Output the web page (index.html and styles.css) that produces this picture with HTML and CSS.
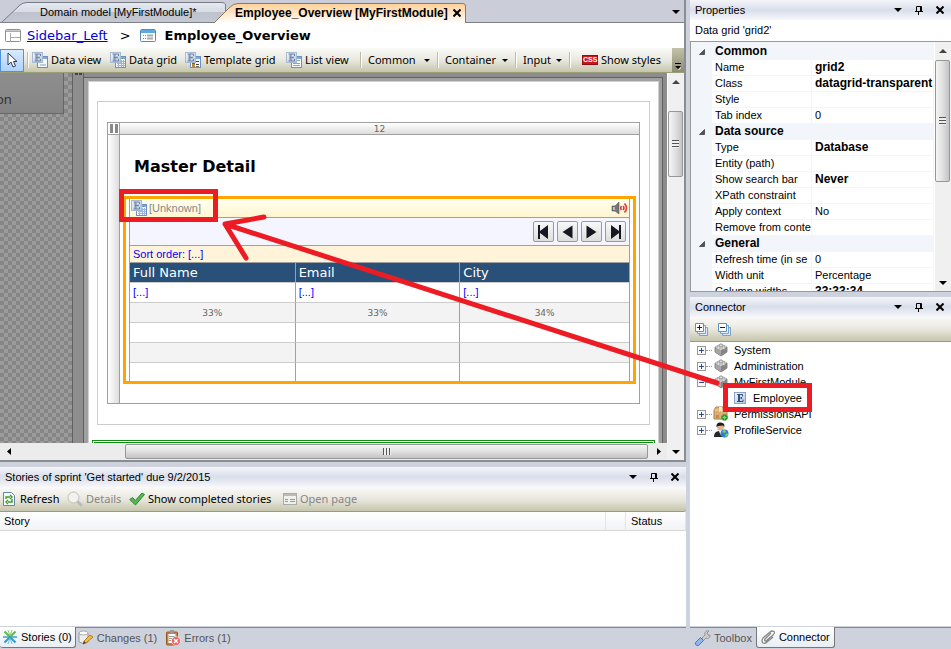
FILE: index.html
```html
<!DOCTYPE html>
<html lang="en">
<head>
<meta charset="utf-8">
<title>Employee_Overview [MyFirstModule]</title>
<link rel="stylesheet" href="styles.css">
</head>
<body>
<svg class="defs" aria-hidden="true">
  <defs>
    <linearGradient id="g-tab" x1="0" y1="0" x2="0" y2="1"><stop offset="0" stop-color="#e6eaf1"/><stop offset=".48" stop-color="#d6dbe4"/><stop offset=".5" stop-color="#bdc2cd"/><stop offset="1" stop-color="#c3c8d2"/></linearGradient>
    <linearGradient id="g-active" x1="0" y1="0" x2="0" y2="1"><stop offset="0" stop-color="#ffcf95"/><stop offset="1" stop-color="#fff"/></linearGradient>
    <linearGradient id="g-blue" x1="0" y1="0" x2="1" y2="1"><stop offset="0" stop-color="#f4f8fc"/><stop offset="1" stop-color="#adc5e3"/></linearGradient>
    <symbol id="entity" viewBox="0 0 16 16">
      <rect x="5.500" y="4.500" width="10" height="11" fill="#f3f8fd" stroke="#6a90c8"/>
      <path d="M6 5h9v2H6z" fill="#86a9da"/>
      <rect x=".5" y=".5" width="10" height="10" fill="url(#g-blue)" stroke="#a9b9cf"/>
      <path d="M2.500 2h6v2M2.500 9h6V7M4 2v7M5 2v7M4 5.500h3.500M7 4.500v2" fill="none" stroke="#6f83a5"/>
    </symbol>
    <symbol id="i-view" viewBox="0 0 16 16"><use href="#entity"/><path d="M8 12h6v2H8z" fill="#b8cce6"/></symbol>
    <symbol id="i-grid" viewBox="0 0 16 16"><use href="#entity"/><path d="M11 9.500h4M7 11.500h8M7 13.500h8M8.500 11v4M11.500 8v7M13.500 8v7" stroke="#9ab6dc" fill="none"/><path d="M12 6h1v1h-1z" fill="#43a047"/></symbol>
    <symbol id="i-template" viewBox="0 0 16 16"><use href="#entity"/><path d="M11 9.500h3M11 12.500h3" stroke="#444" fill="none"/><path d="M7 12h3v3H7z" fill="#b58a3a"/><path d="M7 11h3v1H7zM11 14h3v1h-3z" fill="#666"/></symbol>
    <symbol id="i-list" viewBox="0 0 16 16"><use href="#entity"/><path d="M11 8.500h3M7 11.500h7M7 13.500h7" stroke="#86b18f" fill="none"/></symbol>
    <symbol id="i-e" viewBox="0 0 12 12"><rect x=".5" y=".5" width="11" height="11" fill="url(#g-blue)" stroke="#8ba3c4"/><path d="M3 2.500h5.500v2M3 9.500h6v-2M4.500 2.500v7M5.500 2.500v7M5 6h2.500M7.500 5v2" fill="none" stroke="#35507c"/></symbol>
    <symbol id="i-cube" viewBox="0 0 14 14"><path d="M7 1l6 3v5l-6 4-6-4V4z" fill="#a6a6a6" stroke="#777" stroke-width=".8"/><path d="M7 1l6 3-6 3-6-3z" fill="#e3e3e3"/><path d="M7 7v6l6-4V4z" fill="#858585"/><path d="M3 4a1.500 1 0 0 1 3 0v1.500a1.500 1 0 0 1-3 0zM8 4a1.500 1 0 0 1 3 0v1.500a1.500 1 0 0 1-3 0zM5.500 2a1.500 1 0 0 1 3 0v1a1.500 1 0 0 1-3 0z" fill="#ddd" stroke="#888" stroke-width=".6"/></symbol>
    <symbol id="i-box" viewBox="0 0 16 16"><path d="M1 4l2-3h9l2 3v9H1z" fill="#dcae75" stroke="#b17e45"/><path d="M1.500 4h12" stroke="#f1d3a5"/><path d="M6 1h3v5l-1.500-1L6 6z" fill="#f7e7c9"/><path d="M3 9h3v3H3z" fill="#c38b52"/><path d="M11.500 8.500v6M8.500 11.500h6" stroke="#18851e" stroke-width="3.500"/><path d="M11.500 9.500v4M9.500 11.500h4" stroke="#72df65" stroke-width="1.500"/></symbol>
    <symbol id="i-user" viewBox="0 0 16 16"><path d="M1 15c0-4 2-6 6-6s6 2 6 6z" fill="#26282b"/><path d="M6 9l1.500 4L9 9z" fill="#fff"/><circle cx="7.500" cy="5" r="3.500" fill="#e4b58d"/><path d="M3.500 5C3 1 6 0 8 .5s4 1 3.300 4.500L10 3.500 5 4z" fill="#231e1a"/><circle cx="11.500" cy="11.500" r="4" fill="#2d82cf"/><path d="M9 10l2-2 2 1-1 2zM12 13l2-2 1 2-2 2z" fill="#8ccf68"/></symbol>
    <symbol id="i-plus" viewBox="0 0 9 9"><rect x=".5" y=".5" width="8" height="8" fill="#f8f8f8" stroke="#979797"/><path d="M2 4.500h5M4.500 2v5" stroke="#28489a"/></symbol>
    <symbol id="i-minus" viewBox="0 0 9 9"><rect x=".5" y=".5" width="8" height="8" fill="#f8f8f8" stroke="#979797"/><path d="M2 4.500h5" stroke="#28489a"/></symbol>
    <symbol id="i-down" viewBox="0 0 8 4"><path d="M0 0h8L4 4z"/></symbol>
    <symbol id="i-pin" viewBox="0 0 8 9"><path d="M1.500 5V.5h5V5M5.500 1v4M0 5.500h8M3.500 6v3" fill="none" stroke="#000"/></symbol>
    <symbol id="i-x" viewBox="0 0 8 8"><path d="M.5 .5l7 7M7.500 .5l-7 7" stroke="#000" stroke-width="2" fill="none"/></symbol>
    <symbol id="i-form" viewBox="0 0 16 14"><rect x=".5" y=".5" width="15" height="12" rx="1" fill="#fff" stroke="#5688b8"/><path d="M1 1h14v3H1z" fill="#58aae8"/><path d="M3 6.500h3M3 9.500h3" stroke="#888" stroke-dasharray="1 1"/><path d="M7 6.500h6M7 9.500h6" stroke="#aaa" stroke-width="2"/></symbol>
    <symbol id="i-formgray" viewBox="0 0 14 12"><rect x=".5" y=".5" width="13" height="11" fill="#f0f0ec" stroke="#aaa"/><path d="M1 1h12v2H1z" fill="#bbb"/><path d="M2 6.500h3M2 8.500h3M7 6.500h5M7 8.500h5" stroke="#999"/></symbol>
    <symbol id="i-layout" viewBox="0 0 16 14"><rect x=".5" y=".5" width="15" height="12" rx="1" fill="#fff" stroke="#8e8e8e"/><path d="M1 2.500h14M5.500 4v9M6 8.500h9" stroke="#aaa" fill="none"/><path d="M1 1h14v1H1z" fill="#ccc"/></symbol>
    <symbol id="i-tri" viewBox="0 0 6 6"><path d="M5.500 .5v5h-5z" fill="#555" stroke="#222" stroke-width=".6"/></symbol>
  </defs>
</svg>

<div class="app">
  <main class="left">
    <section class="editor">
      <div class="doctabs" role="tablist">
        <button class="doctab" role="tab"><svg class="tabshape" viewBox="0 0 226 20" preserveAspectRatio="none"><path d="M2 20L20 3Q23 .5 27 .5H221Q225.500 .5 225.500 3V20" fill="url(#g-tab)" stroke="#777b84"/></svg><span>Domain model [MyFirstModule]*</span></button>
        <button class="doctab active" role="tab" aria-selected="true"><svg class="tabshape" viewBox="0 0 252 20" preserveAspectRatio="none"><path d="M0 20L15 5Q19 .5 24 .5H249Q251.500 .5 251.500 3V20" fill="url(#g-active)" stroke="#8f7a5c"/></svg><span>Employee_Overview [MyFirstModule]</span><svg class="ic8"><use href="#i-x"/></svg></button>
        <button class="doclist" aria-label="Open documents"><svg class="caret"><use href="#i-down"/></svg></button>
      </div>
      <nav class="crumbs">
        <svg class="ic-form"><use href="#i-layout"/></svg><a href="#layout">Sidebar_Left</a><span class="gt">&gt;</span><svg class="ic-form"><use href="#i-form"/></svg><b>Employee_Overview</b>
      </nav>
      <div class="toolbar main-tools">
        <button class="pointer" aria-label="Select"><svg width="12" height="17" viewBox="0 0 12 17"><path d="M2 1v12l3-3 2 5 2.500-1-2-4.500H11z" fill="#fff" stroke="#2f3c50"/></svg></button>
        <i class="sep"></i>
        <button class="w-view"><svg class="ic16"><use href="#i-view"/></svg>Data view</button>
        <button class="w-grid"><svg class="ic16"><use href="#i-grid"/></svg>Data grid</button>
        <button class="w-tpl"><svg class="ic16"><use href="#i-template"/></svg>Template grid</button>
        <button class="w-list"><svg class="ic16"><use href="#i-list"/></svg>List view</button>
        <i class="sep"></i>
        <button class="drop w-common">Common<svg class="drop-caret"><use href="#i-down"/></svg></button>
        <i class="sep"></i>
        <button class="drop w-cont">Container<svg class="drop-caret"><use href="#i-down"/></svg></button>
        <i class="sep"></i>
        <button class="drop w-input">Input<svg class="drop-caret"><use href="#i-down"/></svg></button>
        <i class="sep"></i>
        <button class="css-btn"><span class="css-badge">CSS</span>Show styles</button>
        <button class="overflow" aria-label="More tools"><svg width="6" height="7" viewBox="0 0 6 7"><path d="M0 0h6v1H0zM0 3h6L3 6z"/><path d="M3 7l3-3v1L4 7z" fill="#fff"/></svg></button>
      </div>
      <div class="workspace">
        <div class="canvas">
          <div class="sidebar"><div class="sideitem">on</div></div>
          <div class="gutter"><i></i><i></i></div>
          <div class="stage">
            <div class="page">
              <div class="container">
                <div class="layoutgrid">
                  <div class="handle"><i></i><i></i></div>
                  <div class="colhead">12</div>
                  <div class="rowhead"></div>
                  <div class="cell">
                    <h1>Master Detail</h1>
                    <div class="selected">
                      <div class="datagrid">
                        <div class="entitybar"><svg class="ic16"><use href="#i-grid"/></svg><span>[Unknown]</span>
                          <svg class="speaker" width="17" height="12" viewBox="0 0 17 12"><path d="M1 4h3l4-4v12L4 9H1z" fill="#777" stroke="#555" stroke-width=".6"/><path d="M2 5h2v3H2z" fill="#bbb"/><path d="M10.500 4q-1.500 2 0 4M12 4q2 2 0 4M13.500 1.500q4 4.500 0 9" fill="none" stroke="#e2393b" stroke-width="1.600"/></svg></div>
                        <div class="pager">
                          <button aria-label="First"><svg width="11" height="14" viewBox="0 0 11 14"><path d="M0 0h2v6l8-6v14L2 8v6H0z" fill="#151820"/></svg></button>
                          <button aria-label="Previous"><svg width="11" height="14" viewBox="0 0 11 14"><path d="M10.500 .5v13L.5 7z" fill="#151820"/></svg></button>
                          <button aria-label="Next"><svg width="11" height="14" viewBox="0 0 11 14"><path d="M.5 .5v13l10-6.500z" fill="#151820"/></svg></button>
                          <button aria-label="Last"><svg width="11" height="14" viewBox="0 0 11 14"><path d="M11 0H9v6L1 0v14l8-6v6h2z" fill="#151820"/></svg></button>
                        </div>
                        <div class="sort">Sort order: [...]</div>
                        <table class="cols">
                          <colgroup><col class="third"><col class="third"><col></colgroup>
                          <thead><tr><th>Full Name</th><th>Email</th><th>City</th></tr></thead>
                          <tbody>
                            <tr class="attr"><td>[...]</td><td>[...]</td><td>[...]</td></tr>
                            <tr class="pct"><td>33%</td><td>33%</td><td>34%</td></tr>
                            <tr><td></td><td></td><td></td></tr>
                            <tr class="alt"><td></td><td></td><td></td></tr>
                            <tr class="end"><td></td><td></td><td></td></tr>
                          </tbody>
                        </table>
                      </div>
                    </div>
                  </div>
                </div>
              </div>
              <div class="dropzone"></div>
            </div>
          </div>
        </div>
        <div class="vscroll"><svg width="8" height="4" viewBox="0 0 8 4"><path d="M4 0l4 4H0z" fill="#444"/></svg><div class="thumb"><i></i></div><svg class="end" width="8" height="4"><use href="#i-down"/></svg></div>
        <div class="hscroll"><svg width="4" height="7" viewBox="0 0 4 7"><path d="M4 0v7L0 3.500z"/></svg><div class="thumb"><i></i></div><svg width="4" height="7" viewBox="0 0 4 7"><path d="M0 0v7l4-3.500z"/></svg></div>
        <div class="corner"><svg width="8" height="4"><use href="#i-down"/></svg></div>
      </div>
    </section>

    <section class="stories">
      <header class="title"><span>Stories of sprint 'Get started' due 9/2/2015</span><button aria-label="Menu"><svg class="caret"><use href="#i-down"/></svg></button><button aria-label="Pin"><svg class="pin"><use href="#i-pin"/></svg></button><button aria-label="Close"><svg class="ic8"><use href="#i-x"/></svg></button></header>
      <div class="toolbar story-tools">
        <button class="w-refresh"><svg width="12" height="14" viewBox="0 0 12 14"><path d="M.5 .5h8l3 3v10H.5z" fill="#f5faff" stroke="#6484a8"/><path d="M3 7V5h4M7 3l2 2-2 2M9 7v3H5M5 8l-2 2 2 2" fill="none" stroke="#3f9b22" stroke-width="1.400"/></svg>Refresh</button>
        <button class="w-details" disabled><svg width="16" height="16" viewBox="0 0 16 16"><path d="M10 10l4 4" stroke="#bbb" stroke-width="3" stroke-linecap="round"/><circle cx="6.500" cy="6.500" r="5.500" fill="#f2f2ef" stroke="#c0c0bc"/></svg>Details</button>
        <button class="w-show"><svg width="16" height="14" viewBox="0 0 16 14"><path d="M.7 7.500l3-2 2.600 3L13 1l2.500 1.500-9 10.500z" fill="#58b457" stroke="#2f8a38"/></svg>Show completed stories</button>
        <button disabled><svg width="14" height="12"><use href="#i-formgray"/></svg>Open page</button>
      </div>
      <table class="storylist"><thead><tr><th>Story</th><th class="gapcol"></th><th class="status">Status</th></tr></thead></table>
      <div class="blank"></div>
    </section>
    <div class="bottomtabs" role="tablist">
      <button class="on" role="tab"><svg width="16" height="16" viewBox="0 0 16 16"><path d="M1 8h14" stroke="#36a4d8" stroke-width="1.500"/><path d="M2.500 2.500L8 8M8 8l5.500-5.500" stroke="#5fba46" stroke-width="2"/><path d="M6 1l2 6 2-6" fill="none" stroke="#86cb72"/><path d="M8 8l-5.500 5.500M8 8l5.500 5.500" stroke="#2b9cd5" stroke-width="2"/><path d="M6 15l2-6 2 6" fill="none" stroke="#6fbde3"/></svg>Stories (0)</button>
      <button role="tab"><svg width="16" height="16" viewBox="0 0 16 16"><path d="M1 3v9q4 3 9 0V3" fill="#eee" stroke="#999"/><ellipse cx="5.500" cy="3" rx="4.500" ry="2" fill="#fff" stroke="#aaa"/><path d="M5 14l1-3 6-6 3 2-7 6z" fill="#f3bd45" stroke="#b17e27"/><path d="M5 14l1-3 2 2z" fill="#633"/></svg>Changes (1)</button>
      <button role="tab"><svg width="16" height="16" viewBox="0 0 16 16"><rect x="1.500" y="2" width="11" height="13" rx="1" fill="#c88342" stroke="#8e5925"/><path d="M3.500 4h7v9h-7z" fill="#fff"/><path d="M5 0h4v3H5z" fill="#999"/><path d="M4 6.500h6M4 8.500h5M4 10.500h4" stroke="#999"/><circle cx="11" cy="11" r="4.500" fill="#ef6060" stroke="#fff" stroke-width=".6"/><path d="M9 9l4 4M13 9l-4 4" stroke="#fff" stroke-width="1.500"/></svg>Errors (1)</button>
    </div>
  </main>

  <aside class="right">
    <section class="props">
      <header class="title"><span>Properties</span><button aria-label="Menu"><svg class="caret"><use href="#i-down"/></svg></button><button aria-label="Pin"><svg class="pin"><use href="#i-pin"/></svg></button><button aria-label="Close"><svg class="ic8"><use href="#i-x"/></svg></button></header>
      <p class="subject">Data grid 'grid2'</p>
      <div class="propgrid">
        <div class="proprows">
        <table>
          <colgroup><col class="c-toggle"><col class="c-name"><col></colgroup>
          <tbody>
            <tr class="group"><td><svg class="tri"><use href="#i-tri"/></svg></td><th colspan="2">Common</th></tr>
            <tr><td></td><th>Name</th><td><b>grid2</b></td></tr>
            <tr><td></td><th>Class</th><td><b>datagrid-transparent d</b></td></tr>
            <tr><td></td><th>Style</th><td></td></tr>
            <tr><td></td><th>Tab index</th><td>0</td></tr>
            <tr class="group"><td><svg class="tri"><use href="#i-tri"/></svg></td><th colspan="2">Data source</th></tr>
            <tr><td></td><th>Type</th><td><b>Database</b></td></tr>
            <tr><td></td><th>Entity (path)</th><td></td></tr>
            <tr><td></td><th>Show search bar</th><td><b>Never</b></td></tr>
            <tr><td></td><th>XPath constraint</th><td></td></tr>
            <tr><td></td><th>Apply context</th><td>No</td></tr>
            <tr><td></td><th>Remove from conte</th><td></td></tr>
            <tr class="group"><td><svg class="tri"><use href="#i-tri"/></svg></td><th colspan="2">General</th></tr>
            <tr><td></td><th>Refresh time (in se</th><td>0</td></tr>
            <tr><td></td><th>Width unit</th><td>Percentage</td></tr>
            <tr><td></td><th>Column widths</th><td><b>33;33;34</b></td></tr>
          </tbody>
        </table>
        </div>
        <div class="vscroll"><svg width="8" height="4" viewBox="0 0 8 4"><path d="M4 0l4 4H0z" fill="#444"/></svg><div class="thumb"><i></i></div><svg class="end" width="8" height="4"><use href="#i-down"/></svg></div>
      </div>
    </section>
    <section class="connector">
      <header class="title"><span>Connector</span><button aria-label="Menu"><svg class="caret"><use href="#i-down"/></svg></button><button aria-label="Pin"><svg class="pin"><use href="#i-pin"/></svg></button><button aria-label="Close"><svg class="ic8"><use href="#i-x"/></svg></button></header>
      <div class="toolbar tree-tools">
        <button aria-label="Expand all"><svg width="13" height="13" viewBox="0 0 13 13"><path d="M4.500 4.500h8v8h-8z" fill="#dceaf7" stroke="#7ba2c8"/><path d="M2.500 2.500h8v8h-8z" fill="#e6f1fb" stroke="#7ba2c8"/><path d="M.5 .5h8v8h-8z" fill="#fff" stroke="#5d8fc0"/><path d="M2 4.500h5M4.500 2v5" stroke="#222"/></svg></button>
        <button aria-label="Collapse all"><svg width="13" height="13" viewBox="0 0 13 13"><path d="M4.500 4.500h8v8h-8z" fill="#dceaf7" stroke="#7ba2c8"/><path d="M2.500 2.500h8v8h-8z" fill="#e6f1fb" stroke="#7ba2c8"/><path d="M.5 .5h8v8h-8z" fill="#fff" stroke="#5d8fc0"/><path d="M2 4.500h5" stroke="#222"/></svg></button>
      </div>
      <ul class="tree">
        <li><svg class="tog"><use href="#i-plus"/></svg><i></i><svg class="cube"><use href="#i-cube"/></svg>System</li>
        <li><svg class="tog"><use href="#i-plus"/></svg><i></i><svg class="cube"><use href="#i-cube"/></svg>Administration</li>
        <li><svg class="tog"><use href="#i-minus"/></svg><i></i><svg class="cube"><use href="#i-cube"/></svg>MyFirstModule</li>
        <li class="child"><svg class="ent"><use href="#i-e"/></svg>Employee</li>
        <li><svg class="tog"><use href="#i-plus"/></svg><i></i><svg class="cube tall"><use href="#i-box"/></svg>PermissionsAPI</li>
        <li><svg class="tog"><use href="#i-plus"/></svg><i></i><svg class="cube tall"><use href="#i-user"/></svg>ProfileService</li>
      </ul>
    </section>
    <div class="bottomtabs" role="tablist">
      <button role="tab"><svg width="17" height="16" viewBox="0 0 17 16"><path d="M8 8l3-3c-1-3 2-5 4-4l-2 2 1 2h2c0 3-2 4-4 3l-3 3z" fill="#ccc" stroke="#888" stroke-width=".8"/><path d="M1.500 12.500l5-5 3 3-5 5q-4 0-3-3z" fill="#8fb4ee" stroke="#4f79c1"/></svg>Toolbox</button>
      <button class="on" role="tab"><svg width="15" height="14" viewBox="0 0 15 14"><path d="M10 3L4 9q-1 2 1 2l7-6q3-3 0-4-2 0-3 1L2 8q-2 3 0 5 2 1 4-1l6-5" fill="none" stroke="#888" stroke-width="1.300"/></svg>Connector</button>
    </div>
  </aside>
</div>

<svg class="annotations" width="951" height="649" viewBox="0 0 951 649" aria-hidden="true">
  <g fill="none" stroke="#ed1c24">
    <rect x="121.500" y="191.500" width="94" height="28" stroke-width="5"/>
    <rect x="725.500" y="385.500" width="84" height="24" stroke-width="5"/>
    <path d="M717 383L225 224M264 217l-39 7 21 34" stroke-width="5" stroke-linecap="round" stroke-linejoin="round"/>
  </g>
</svg>
</body>
</html>
```
FILE: styles.css
```css
* { box-sizing: border-box; }
body {
  margin: 0;
  background: #ced2dd;
  color: #000;
  font: 11px/16px "Liberation Sans", sans-serif;
  overflow: hidden;
}
button { border: 0; padding: 0; margin: 0; background: none; color: inherit; font: inherit; display: flex; align-items: center; white-space: nowrap; }
svg { display: block; flex: none; }
table { border-collapse: separate; border-spacing: 0; width: 100%; table-layout: fixed; }
.defs { position: absolute; width: 0; height: 0; }
.annotations { position: absolute; left: 0; top: 0; pointer-events: none; }
.ic8 { width: 8px; height: 8px; }
.ic16 { width: 16px; height: 16px; }
.caret { width: 8px; height: 4px; }
.pin { width: 8px; height: 9px; }

.app { display: grid; grid-template-columns: minmax(0, 1fr) 261px; column-gap: 4px; height: 100vh; min-height: 649px; }
.left, .right { display: flex; flex-direction: column; min-height: 0; min-width: 0; }

/* document editor */
.editor { flex: 1; display: flex; flex-direction: column; min-height: 0; border-right: 2px solid #8a8d92; border-bottom: 2px solid #8a8d92; background: #fff; }
.doctabs { display: flex; height: 23px; background: #cbced9; border-bottom: 1px solid #7c8088; align-items: flex-end; }
.doctab { position: relative; height: 20px; width: 226px; padding-left: 40px; }
.doctab span { position: relative; }
.doctab.active { width: 252px; margin-left: -12px; margin-bottom: -1px; padding-left: 21px; font-weight: bold; font-size: 12px; gap: 5px; }
.doctab.active .ic8 { position: relative; }
.tabshape { position: absolute; left: 0; top: 0; width: 100%; height: 100%; }
.doclist { margin-left: auto; height: 20px; padding-right: 4px; }

.crumbs { display: flex; align-items: center; height: 25px; padding-left: 5px; font-family: "DejaVu Sans", sans-serif; font-size: 13px; }
.crumbs a { color: #0000e0; margin-left: 6px; }
.crumbs .gt { margin: 0 9px 0 12px; }
.crumbs b { margin-left: 9px; }
.ic-form { width: 16px; height: 14px; }

.toolbar { display: flex; align-items: center; font-family: "Noto Sans", sans-serif; background: linear-gradient(#fafaf7, #e9e8df 50%, #c6c5ac); border-bottom: 1px solid #9c9c78; }
.main-tools { height: 25px; }
.toolbar button { gap: 3px; }
.pointer { width: 24px; height: 23px; justify-content: center; background: linear-gradient(#d8eaff, #aed2ff); border: 1px solid #4f93de; }
.sep { width: 2px; height: 16px; border-left: 1px solid #bdbba0; border-right: 1px solid #fff; flex: none; }
.pointer + .sep { margin: 0 3px 0 3px; }
.w-view { width: 78px; }
.w-grid { width: 75px; }
.w-tpl { width: 101px; }
.w-list { width: 74px; }
.drop { justify-content: space-between; padding: 0 7px 0 6px; }
.w-common { width: 75px; }
.w-cont { width: 76px; }
.w-input { width: 52px; }
.drop-caret { width: 6px; height: 3px; }
.css-btn { margin-left: 11px; }
.css-badge { width: 16px; height: 10px; background: #c8171e; border: 1px solid #8e1015; color: #fff; font: bold 7px/8px "Liberation Sans", sans-serif; text-align: center; }
.toolbar .overflow { margin-left: auto; width: 12px; height: 24px; justify-content: center; align-items: flex-end; padding-bottom: 2px; background: linear-gradient(#c2c1aa, #8e8d72); }

.workspace { flex: 1; min-height: 0; display: grid; grid-template: minmax(0, 1fr) 17px / minmax(0, 1fr) 17px; }
.canvas { display: flex; background: #a0a0a0; overflow: hidden; min-width: 0; }
.sidebar { width: 72px; flex: none; background: repeating-conic-gradient(#868686 0 25%, #9c9c9c 0 50%) 0 0 / 8px 8px; }
.sideitem { width: 64px; height: 41px; padding: 16px 0 0; background: linear-gradient(#8e8e8e, #848484); border-right: 1px solid #666; border-bottom: 1px solid #666; color: #333; font: 13px/20px "Noto Sans", sans-serif; text-indent: -4px; overflow: hidden; }
.gutter { width: 12px; flex: none; background: #8e8e8e; border: solid #606060; border-width: 0 1px; display: flex; justify-content: center; gap: 1px; }
.gutter i { width: 3px; height: 2px; background: #444; }
.stage { flex: 1; min-width: 0; padding: 4px 4px 0 4px; border-top: 4px solid #8c8c8c; border-right: 4px solid #8c8c8c; background: #a0a0a0; box-shadow: inset 0 1px #606060, inset -1px 0 #606060; }
.page { height: 100%; background: #fff; border: solid #d0d0d0; border-width: 1px 1px 0; display: flex; flex-direction: column; padding: 19px 8px 0; }
.container { flex: none; border: 1px solid #ccc; padding: 20px 9px; }
.layoutgrid { display: grid; grid-template: 12px auto / 12px 1fr; border: solid #a0a0a0; border-width: 0 1px 1px 0; }
.layoutgrid > div { border: solid #a0a0a0; border-width: 1px 0 0 1px; }
.handle { display: flex; justify-content: center; align-items: center; gap: 2px; }
.handle i { width: 3px; height: 9px; background: #888; }
.colhead { background: linear-gradient(#fff, #ddd); color: #666; font: 9px/12px "DejaVu Sans", sans-serif; text-align: center; }
.rowhead { background: linear-gradient(90deg, #fff, #ddd); }
.cell { padding: 20px 3px 19px; }
.cell h1 { margin: 0 0 17px 11px; font: bold 16px/24px "DejaVu Sans", sans-serif; }
.selected { border: 3px solid #ffa500; padding: 0 3px; }
.datagrid { border: solid #a0a0a0; border-width: 0 1px; }
.entitybar { display: flex; align-items: center; height: 19px; padding: 0 1px; background: linear-gradient(#fffff0, #fff5cf); border-bottom: 1px solid #a0a0a0; color: #888; }
.entitybar span { margin-left: 2px; }
.speaker { margin-left: auto; }
.pager { display: flex; justify-content: flex-end; align-items: center; gap: 3px; height: 28px; padding-right: 3px; background: #f4f5ff; border-bottom: 1px solid #a0a0a0; }
.pager button { width: 21px; height: 21px; justify-content: center; border: 1px solid #9b9b9b; border-radius: 2px; background: linear-gradient(#f8f8f8, #ddd); }
.sort { height: 17px; padding-left: 3px; background: #fff4d9; border-bottom: 1px solid #a0a0a0; color: #00f; }
.third { width: 33%; }
.cols th, .cols td { height: 20px; padding: 0 3px; border-left: 1px solid #a0a0a0; border-bottom: 1px solid #ccc; text-align: left; line-height: 16px; }
.cols th:first-child, .cols td:first-child { border-left: 0; }
.cols th { background: #285078; color: #fff; font: 13px/18px "DejaVu Sans", sans-serif; }
.cols .attr td { color: #00f; padding-bottom: 2px; }
.cols .pct td { background: #f3f3f3; color: #666; font: 9px/16px "DejaVu Sans", sans-serif; text-align: center; }
.cols .alt td { background: #f3f3f3; }
.cols .end td { height: 18px; border-bottom: 0; }
.dropzone { flex: none; height: 30px; margin: 15px -5px 0; border: 3px double #138a13; }

/* scroll bars */
.vscroll { width: 17px; background: #f0f0f0; border-left: 1px solid #fff; display: flex; flex-direction: column; align-items: center; padding: 7px 1px 6px 0; }
.vscroll .thumb { display: flex; align-items: center; justify-content: center; width: 15px; height: 66px; margin-top: 27px; border: 1px solid #979797; border-radius: 2px; background: linear-gradient(90deg, #f5f5f5, #e0e0e0 50%, #c4c4c8); }
.vscroll .thumb i { width: 7px; height: 8px; background: repeating-linear-gradient(#555 0 1px, #eee 1px 3px); }
.vscroll .end { margin-top: auto; }
.workspace > .vscroll .end { display: none; }
.hscroll { background: #ececec; display: flex; align-items: center; padding: 0 6px 0 7px; }
.hscroll .thumb { display: flex; align-items: center; justify-content: center; flex: 1; height: 15px; margin: 0 9px 0 114px; border: 1px solid #979797; border-radius: 2px; background: linear-gradient(#f5f5f5, #e0e0e0 50%, #c4c4c8); }
.hscroll .thumb i { width: 8px; height: 7px; background: repeating-linear-gradient(90deg, #555 0 1px, #eee 1px 3px); }
.corner { background: #f0f0f0; display: flex; align-items: center; justify-content: center; }

/* docked panels */
.title { display: flex; align-items: center; height: 20px; flex: none; padding: 0 7px 0 5px; background: linear-gradient(#f4f5f9, #d8deea 50%, #f6f7fb); }
.title span { margin-right: auto; }
.title button { margin-left: 13px; }
.stories { display: flex; flex-direction: column; height: 160px; flex: none; margin-top: 5px; }
.story-tools { height: 25px; padding-left: 3px; border-radius: 0 0 3px 0; }
.toolbar.story-tools button { gap: 5px; }
.toolbar.story-tools button:nth-child(n+2) { gap: 3px; }
.story-tools button:disabled { color: #858585; }
.w-refresh { width: 64px; }
.w-details { width: 62px; }
.w-show { width: 154px; }
.storylist { background: linear-gradient(#fff, #f1f2f4); }
.storylist th { height: 19px; padding: 0 4px; border-bottom: 1px solid #d8d8d8; border-right: 1px solid #e4e4e4; font-weight: normal; text-align: left; }
.storylist .gapcol { width: 20px; }
.storylist .status { width: 60px; padding-left: 5px; }
.blank { flex: 1; background: #fff; border-bottom: 1px solid #ced2dd; }

.bottomtabs { display: flex; height: 22px; flex: none; border-top: 1px solid #888; color: #555; gap: 4px; align-items: flex-start; }
.bottomtabs button { height: 20px; gap: 3px; padding-left: 4px; }
.bottomtabs .on { color: #000; background: linear-gradient(#fff, #e8eef4); border: solid #777; border-width: 0 1px 1px; border-radius: 0 0 3px 3px; padding: 0 4px 0 2px; margin-top: -1px; height: 21px; }
.left .bottomtabs .on { border-left: 0; margin-right: -6px; padding-right: 3px; }
.bottomtabs button + button.on { padding-left: 4px; }

/* property sheet */
.props { flex: none; }
.subject { margin: 0; height: 21px; padding: 2px 4px 0 5px; background: #fff; }
.propgrid { display: flex; height: 251px; border: solid #999; border-width: 1px 0 1px 1px; background: #fff; overflow: hidden; }
.proprows { flex: 1; min-width: 0; overflow: hidden; padding-top: 2px; background: #f2f5fa; }
.proprows table { background: #fff; }
.c-toggle { width: 21px; }
.c-name { width: 100px; }
.propgrid td, .propgrid th { height: 16px; line-height: 15px; padding: 0 0 0 3px; font-weight: normal; text-align: left; border-bottom: 1px solid #f2f5fa; border-right: 1px solid #f2f5fa; white-space: nowrap; overflow: hidden; }
.propgrid td:first-child { background: #f2f5fa; }
.propgrid b { font-size: 12px; }
.propgrid .group td, .propgrid .group th { background: #f2f5fa; font-weight: bold; font-size: 12px; }
.tri { width: 6px; height: 6px; margin-left: 5px; }
.propgrid .vscroll .thumb { height: 122px; margin-top: 7px; flex: none; }

/* connector tree */
.connector { flex: 1; display: flex; flex-direction: column; min-height: 0; margin-top: 5px; }
.tree-tools { height: 25px; padding-left: 5px; }
.tree-tools button + button { margin-left: 10px; }
.tree { flex: 1; margin: 0; padding: 0 0 0 7px; list-style: none; background: #fff; border-bottom: 1px solid #ced2dd; }
.tree li { display: flex; align-items: center; height: 16px; }
.tog { width: 9px; height: 9px; }
.tree i { width: 6px; border-top: 1px dotted #999; }
.cube { width: 16px; height: 14px; margin: 0 5px 0 1px; }
.cube.tall { height: 16px; }
.tree .child { padding-left: 37px; gap: 7px; }
.ent { width: 12px; height: 12px; }
```
